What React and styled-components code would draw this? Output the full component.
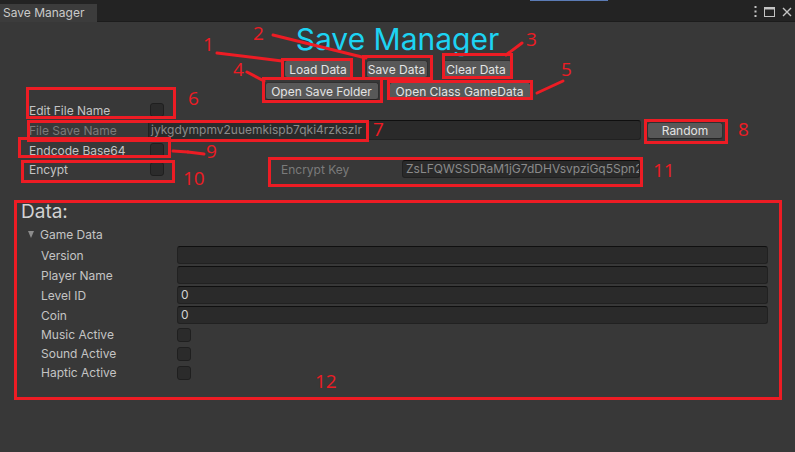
import React from 'react';
import styled, { createGlobalStyle } from 'styled-components';

const GlobalStyle = createGlobalStyle`
  html, body {
    margin: 0;
    padding: 0;
    background: #383838;
  }
  body {
    font-family: Inter, "Noto Sans", sans-serif;
    font-size: 12px;
    color: #c4c4c4;
  }
`;

const Window = styled.div`
  position: relative;
  width: 795px;
  height: 452px;
  background: #383838;
  overflow: hidden;
`;

const TabBar = styled.div`
  position: relative;
  display: flex;
  align-items: flex-end;
  height: 21px;
  background: #232323;
  border-bottom: 1px solid #1c1c1c;

  &::before {
    content: '';
    position: absolute;
    left: 530px;
    top: 0;
    width: 78px;
    height: 1px;
    background: #5b7bb5;
  }
`;

const Tab = styled.div`
  box-sizing: border-box;
  width: 97px;
  height: 18px;
  margin-bottom: -1px;
  padding-left: 3px;
  background: #3c3c3c;
  line-height: 18px;
  color: #cacaca;
`;

const WindowControls = styled.div`
  display: flex;
  align-items: center;
  gap: 7px;
  margin-left: auto;
  margin-right: 3px;
  align-self: center;
  margin-top: 2px;
  color: #c4c4c4;
`;

const Content = styled.div`
  display: flex;
  flex-direction: column;
`;

const Title = styled.h1`
  margin: 0;
  font-weight: 400;
  font-size: 30px;
  line-height: 34px;
  color: #1dd3f3;
  text-align: center;
`;

const ButtonRow = styled.div`
  display: flex;
  justify-content: center;
  gap: ${p => p.$gap}px;
  margin-top: ${p => p.$mt}px;
`;

const Button = styled.button`
  box-sizing: border-box;
  width: ${p => p.$w}px;
  height: ${p => p.$h || 18}px;
  margin-left: ${p => p.$ml || 0}px;
  padding: 0;
  background: #585858;
  border: 1px solid #303030;
  border-bottom-color: #242424;
  border-radius: 3px;
  font-family: Inter, "Noto Sans", sans-serif;
  font-size: 12px;
  color: #e4e4e4;
  flex-shrink: 0;
`;

const Fields = styled.div`
  display: flex;
  flex-direction: column;
  gap: 1px;
  margin-top: 1px;
  padding-left: 29px;
`;

const Row = styled.div`
  display: flex;
  align-items: center;
  height: ${p => p.$h}px;
`;

const Label = styled.span`
  flex-shrink: 0;
  width: ${p => p.$w}px;
  color: ${p => (p.$dim ? '#7b7b7b' : '#c4c4c4')};
  white-space: nowrap;
`;

const Checkbox = styled.span`
  box-sizing: border-box;
  width: 14px;
  height: 14px;
  margin-left: ${p => p.$ml || 0}px;
  background: #2b2b2b;
  border: 1px solid #1f1f1f;
  border-radius: 3px;
  flex-shrink: 0;
`;

const TextField = styled.div`
  box-sizing: border-box;
  width: ${p => p.$w}px;
  height: ${p => p.$h}px;
  padding-left: ${p => p.$pl || 3}px;
  background: #2a2a2a;
  border: 1px solid #212121;
  border-top-color: #0f0f0f;
  border-radius: 3px;
  line-height: ${p => p.$h - 2}px;
  color: ${p => (p.$dim ? '#8a8a8a' : '#d2d2d2')};
  white-space: nowrap;
  overflow: hidden;
  flex-shrink: 0;
`;

const EncryptGroup = styled.div`
  display: flex;
  align-items: center;
  margin-left: 117px;
`;

const DataSection = styled.section`
  display: flex;
  flex-direction: column;
  margin-top: 22px;
  padding-left: 21px;
`;

const DataTitle = styled.h2`
  margin: 0;
  font-weight: 400;
  font-size: 19px;
  line-height: 23px;
  color: #d2d2d2;
`;

const Foldout = styled.div`
  display: flex;
  align-items: center;
  gap: 6px;
  height: 18px;
  margin-top: 2px;
  padding-left: 7px;
  color: #c4c4c4;
`;

const Triangle = styled.span`
  width: 0;
  height: 0;
  border-left: 3.5px solid transparent;
  border-right: 3.5px solid transparent;
  border-top: 7px solid #8c8c8c;
`;

const DataRows = styled.div`
  display: flex;
  flex-direction: column;
  margin-top: 2px;
  padding-left: 20px;
`;

const Overlay = styled.div`
  position: absolute;
  inset: 0;
  pointer-events: none;
`;

const MarkBox = styled.div`
  position: absolute;
  box-sizing: border-box;
  left: ${p => p.$x}px;
  top: ${p => p.$y}px;
  width: ${p => p.$w}px;
  height: ${p => p.$h}px;
  border: 3px solid #ed1c24;
`;

const MarkNumber = styled.span`
  position: absolute;
  left: ${p => p.$x}px;
  top: ${p => p.$y}px;
  font-family: "Open Sans", "Liberation Sans", sans-serif;
  font-size: 19px;
  line-height: 19px;
  color: #ed1c24;
`;

const MarkLines = styled.svg`
  position: absolute;
  left: 0;
  top: 0;
`;

const boxes = [
  [281, 58, 72, 22],
  [362, 55, 71, 25],
  [442, 53, 71, 26],
  [262, 77, 121, 26],
  [387, 80, 146, 20],
  [26, 87, 150, 32],
  [27, 120, 342, 22],
  [644, 119, 84, 25],
  [18, 137, 153, 21],
  [21, 160, 154, 23],
  [268, 157, 375, 30],
  [14, 200, 768, 200],
];

const numbers = [
  ['1', 203, 35],
  ['2', 253, 24],
  ['3', 526, 30],
  ['4', 233, 60],
  ['5', 561, 60],
  ['6', 188, 89],
  ['7', 373, 120],
  ['8', 738, 120],
  ['9', 206, 142],
  ['10', 183, 169],
  ['11', 653, 161],
  ['12', 315, 372],
];

const lines = [
  [217, 53, 282, 61],
  [273, 35, 366, 58],
  [522, 43, 506, 55],
  [247, 72, 264, 81],
  [537, 93, 563, 81],
  [173, 151, 188, 152],
  [188, 152, 204, 154],
];

const dataFields = [
  ['Version', ''],
  ['Player Name', ''],
  ['Level ID', '0'],
  ['Coin', '0'],
];

const dataToggles = ['Music Active', 'Sound Active', 'Haptic Active'];

const Annotations = () => (
  <Overlay>
    {boxes.map(([x, y, w, h], i) => (
      <MarkBox key={i} $x={x} $y={y} $w={w} $h={h} />
    ))}
    <MarkLines width="795" height="452">
      {lines.map(([x1, y1, x2, y2], i) => (
        <line key={i} x1={x1} y1={y1} x2={x2} y2={y2} stroke="#ed1c24" strokeWidth="3" strokeLinecap="round" />
      ))}
    </MarkLines>
    {numbers.map(([n, x, y]) => (
      <MarkNumber key={n} $x={x} $y={y}>{n}</MarkNumber>
    ))}
  </Overlay>
);

export default function App() {
  return (
    <>
      <GlobalStyle />
      <Window>
        <TabBar>
          <Tab>Save Manager</Tab>
          <WindowControls>
            <svg width="3" height="11" viewBox="0 0 3 11">
              <rect x="0.5" y="0" width="2" height="2" fill="currentColor" />
              <rect x="0.5" y="4.5" width="2" height="2" fill="currentColor" />
              <rect x="0.5" y="9" width="2" height="2" fill="currentColor" />
            </svg>
            <svg width="11" height="10" viewBox="0 0 11 10">
              <rect x="0.5" y="0.5" width="10" height="9" fill="none" stroke="currentColor" />
              <rect x="0.5" y="0.5" width="10" height="2" fill="currentColor" />
            </svg>
            <svg width="10" height="10" viewBox="0 0 10 10">
              <path d="M1 1 L9 9 M9 1 L1 9" stroke="currentColor" strokeWidth="1.4" />
            </svg>
          </WindowControls>
        </TabBar>

        <Content>
          <Title>Save Manager</Title>
          <ButtonRow $gap={13} $mt={4}>
            <Button $w={69}>Load Data</Button>
            <Button $w={62}>Save Data</Button>
            <Button $w={71}>Clear Data</Button>
          </ButtonRow>
          <ButtonRow $gap={10} $mt={4}>
            <Button $w={114}>Open Save Folder</Button>
            <Button $w={142}>Open Class GameData</Button>
          </ButtonRow>

          <Fields>
            <Row $h={18}>
              <Label $w={119}>Edit File Name</Label>
              <Checkbox $ml={2} />
            </Row>
            <Row $h={20}>
              <Label $w={119} $dim>File Save Name</Label>
              <TextField $w={493} $h={20} $pl={2} $dim>jykgdympmv2uuemkispb7qki4rzkszlr</TextField>
              <Button $w={76} $h={17} $ml={6}>Random</Button>
            </Row>
            <Row $h={18}>
              <Label $w={119}>Endcode Base64</Label>
              <Checkbox $ml={2} />
            </Row>
            <Row $h={18}>
              <Label $w={119}>Encypt</Label>
              <Checkbox $ml={2} />
              <EncryptGroup>
                <Label $w={121} $dim>Encrypt Key</Label>
                <TextField $w={238} $h={18} $dim>ZsLFQWSSDRaM1jG7dDHVsvpziGq5Spn2</TextField>
              </EncryptGroup>
            </Row>
          </Fields>

          <DataSection>
            <DataTitle>Data:</DataTitle>
            <Foldout>
              <Triangle />
              Game Data
            </Foldout>
            <DataRows>
              {dataFields.map(([name, value]) => (
                <Row key={name} $h={20}>
                  <Label $w={136}>{name}</Label>
                  <TextField $w={591} $h={18}>{value}</TextField>
                </Row>
              ))}
              {dataToggles.map(name => (
                <Row key={name} $h={19}>
                  <Label $w={136}>{name}</Label>
                  <Checkbox />
                </Row>
              ))}
            </DataRows>
          </DataSection>
        </Content>

        <Annotations />
      </Window>
    </>
  );
}
